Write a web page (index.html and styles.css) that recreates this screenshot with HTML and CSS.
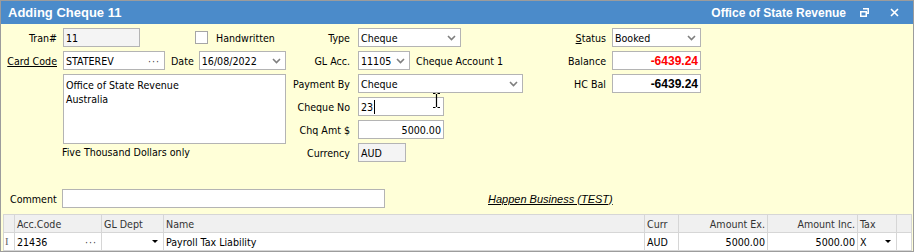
FILE: index.html
```html
<!DOCTYPE html>
<html lang="en">
<head>
    <meta charset="UTF-8">
    <title>Adding Cheque 11</title>
    <link rel="stylesheet" href="styles.css">
</head>
<body>
<div class="window">
    <div class="titlebar">
        <span class="title">Adding Cheque 11</span>
        <span class="title-right">Office of State Revenue</span>
        <svg class="tb-restore" width="9" height="9" viewBox="0 0 9 9">
            <path d="M3 .75h5.25v4.5H6.5" fill="none" stroke="#fff" stroke-width="1.5"/>
            <rect x=".75" y="3.75" width="5.5" height="4.5" fill="none" stroke="#fff" stroke-width="1.5"/>
        </svg>
        <svg class="tb-close" width="9" height="9" viewBox="0 0 9 9">
            <path d="M1 1l7 7M8 1l-7 7" stroke="#fff" stroke-width="1.6"/>
        </svg>
    </div>

    <div class="form">
        <!-- left: transaction + card -->
        <div class="col col-left">
            <div class="row">
                <span class="lbl">Tran#</span>
                <div class="field ro w-tran">11</div>
                <span class="check"></span>
                <span>Handwritten</span>
            </div>
            <div class="row">
                <span class="lbl link">Card Code</span>
                <div class="field w-card"><span class="grow">STATEREV</span><span class="dots">···</span></div>
                <span class="lbl-inline">Date</span>
                <div class="field sel w-date"><span class="grow">16/08/2022</span><svg class="chev" width="9" height="6" viewBox="0 0 9 6"><polyline points="1,1 4.5,4.5 8,1"/></svg></div>
            </div>
            <div class="memo">Office of State Revenue<br>Australia</div>
            <div class="words">Five Thousand Dollars only</div>
        </div>

        <!-- middle: payment -->
        <div class="col col-mid">
            <div class="row">
                <span class="lbl">Type</span>
                <div class="field sel w-type"><span class="grow">Cheque</span><svg class="chev" width="9" height="6" viewBox="0 0 9 6"><polyline points="1,1 4.5,4.5 8,1"/></svg></div>
            </div>
            <div class="row">
                <span class="lbl">GL Acc.</span>
                <div class="field sel w-gl"><span class="grow">11105</span><svg class="chev" width="9" height="6" viewBox="0 0 9 6"><polyline points="1,1 4.5,4.5 8,1"/></svg></div>
                <span class="acc-name">Cheque Account 1</span>
            </div>
            <div class="row">
                <span class="lbl">Payment By</span>
                <div class="field sel w-pay"><span class="grow">Cheque</span><svg class="chev" width="9" height="6" viewBox="0 0 9 6"><polyline points="1,1 4.5,4.5 8,1"/></svg></div>
            </div>
            <div class="row">
                <span class="lbl">Cheque No</span>
                <div class="field w-chq">23<span class="caret"></span></div>
            </div>
            <div class="row">
                <span class="lbl">Chq Amt $</span>
                <div class="field w-chq num">5000.00</div>
            </div>
            <div class="row">
                <span class="lbl">Currency</span>
                <div class="field ro w-cur">AUD</div>
            </div>
        </div>

        <!-- right: status + balances -->
        <div class="col col-right">
            <div class="row">
                <span class="lbl"><span class="u">S</span>tatus</span>
                <div class="field sel w-stat"><span class="grow">Booked</span><svg class="chev" width="9" height="6" viewBox="0 0 9 6"><polyline points="1,1 4.5,4.5 8,1"/></svg></div>
            </div>
            <div class="row">
                <span class="lbl">Balance</span>
                <div class="field w-stat num bal neg">-6439.24</div>
            </div>
            <div class="row">
                <span class="lbl">HC Bal</span>
                <div class="field w-stat num bal">-6439.24</div>
            </div>
        </div>
    </div>

    <div class="comment-row">
        <span class="c-lbl">Comment</span>
        <div class="field w-comment"></div>
        <span class="biz">Happen Business (TEST)</span>
    </div>

    <table class="grid">
        <colgroup>
            <col style="width:11px"><col style="width:87px"><col style="width:62px"><col style="width:481px">
            <col style="width:34px"><col style="width:89px"><col style="width:90px"><col style="width:39px"><col>
        </colgroup>
        <thead>
            <tr>
                <th></th><th>Acc.Code</th><th>GL Dept</th><th>Name</th><th>Curr</th>
                <th class="r">Amount Ex.</th><th class="r">Amount Inc.</th><th>Tax</th><th></th>
            </tr>
        </thead>
        <tbody>
            <tr>
                <td class="ind">I</td>
                <td><div class="cell"><span>21436</span><span class="dots">···</span></div></td>
                <td><div class="cell"><span></span><svg class="tri" width="6" height="3" viewBox="0 0 6 3"><polygon points="0,0 6,0 3,3"/></svg></div></td>
                <td>Payroll Tax Liability</td>
                <td>AUD</td>
                <td class="r">5000.00</td>
                <td class="r">5000.00</td>
                <td><div class="cell"><span>X</span><svg class="tri" width="6" height="3" viewBox="0 0 6 3"><polygon points="0,0 6,0 3,3"/></svg></div></td>
                <td></td>
            </tr>
        </tbody>
    </table>

    <svg class="ibeam" width="9" height="17" viewBox="0 0 9 17">
        <path d="M1 1.5h2.5M5.5 1.5H8M4.5 2v13M1 15.5h2.5M5.5 15.5H8" stroke="#000" stroke-width="1.2" fill="none"/>
    </svg>
</div>
</body>
</html>
```

FILE: styles.css
```css
* { box-sizing: border-box; }
body {
    margin: 0;
    background: #fff;
    font-family: "DejaVu Sans Condensed", "Liberation Sans", sans-serif;
    font-size: 10.6px;
    color: #000;
}
.window {
    position: relative;
    width: 914px;
    height: 252px;
    border: 1px solid #9c9c9c;
    background: #ffffd8;
    overflow: hidden;
}
.titlebar {
    height: 23px;
    background: #4b8bca;
    color: #fff;
    display: flex;
    align-items: center;
    padding-left: 7px;
    font-family: "Liberation Sans", sans-serif;
    font-weight: bold;
}
.title { font-size: 13px; flex: 1; }
.title-right { font-size: 12px; }
.tb-restore { margin-left: 14px; }
.tb-close { margin-left: 21px; margin-right: 14px; }

.form {
    display: flex;
    padding-top: 4px;
}
.col { display: flex; flex-direction: column; gap: 4px; }
.col-left { width: 289px; }
.col-mid { width: 270px; }
.col-right { width: 160px; }
.row { display: flex; align-items: center; height: 19px; }
.lbl { flex: none; text-align: right; width: 56px; margin-right: 6px; }
.col-mid .lbl { width: 60px; margin-right: 8px; }
.col-right .lbl { width: 46px; margin-right: 6px; }
.link { text-decoration: underline; }
.u { text-decoration: underline; }

.field {
    flex: none;
    height: 19px;
    border: 1px solid #b4b4b4;
    background: #fff;
    padding: 0 2px;
    display: flex;
    align-items: center;
    white-space: nowrap;
}
.field.ro { background: #f4f4f4; }
.field.num { justify-content: flex-end; }
.grow { flex: 1; }
.chev { fill: none; stroke: #7f7f7f; stroke-width: 1.6; margin-right: 2px; }
.dots { color: #444; letter-spacing: 1px; margin-right: 2px; }

.w-tran { width: 77px; }
.check {
    width: 13px;
    height: 13px;
    border: 1px solid #a6a6a6;
    background: #fff;
    margin-left: 55px;
    margin-right: 8px;
}
.w-card { width: 102px; }
.lbl-inline { margin-left: 6px; margin-right: 5px; }
.w-date { width: 87px; }
.memo {
    margin-left: 62px;
    width: 223px;
    height: 70px;
    border: 1px solid #b4b4b4;
    background: #fff;
    padding: 3px 2px;
    line-height: 14px;
}
.words { margin-left: 61px; margin-top: -2px; height: 12px; line-height: 12px; }

.w-type { width: 103px; }
.w-gl { width: 52px; }
.acc-name { margin-left: 6px; }
.w-pay { width: 165px; }
.w-chq { width: 86px; }
.w-cur { width: 48px; }
.caret { display: inline-block; width: 1px; height: 14px; background: #000; margin-left: 1px; }

.w-stat { width: 89px; }
.bal { font-weight: bold; font-family: "Liberation Sans", sans-serif; font-size: 12px; }
.neg { color: #ff0000; }

.comment-row {
    display: flex;
    align-items: center;
    height: 19px;
    margin-top: 27px;
}
.c-lbl { width: 61px; padding-left: 9px; }
.w-comment { width: 323px; }
.biz {
    margin-left: 103px;
    font-family: "Liberation Sans", sans-serif;
    font-style: italic;
    font-size: 11px;
    text-decoration: underline;
}

.grid {
    margin-top: 6px;
    margin-left: 2px;
    width: 909px;
    border-collapse: collapse;
    table-layout: fixed;
    border: 1px solid #a0a0a0;
    background: #fff;
}
.grid th, .grid td {
    height: 18px;
    padding: 0 2px;
    border: 1px solid #d6d6d6;
    text-align: left;
    white-space: nowrap;
    overflow: hidden;
}
.grid th { background: #f0f0f0; font-weight: normal; color: #333; }
.grid thead tr { border-top: 1px solid #a0a0a0; }
.grid .r { text-align: right; }
.grid .ind { color: #666; font-family: "Liberation Serif", serif; padding: 0 1px; background: #fff; }
.cell { display: flex; align-items: center; justify-content: space-between; }
.tri { fill: #000; margin-right: 3px; }

.ibeam { position: absolute; left: 431px; top: 91px; }
```
